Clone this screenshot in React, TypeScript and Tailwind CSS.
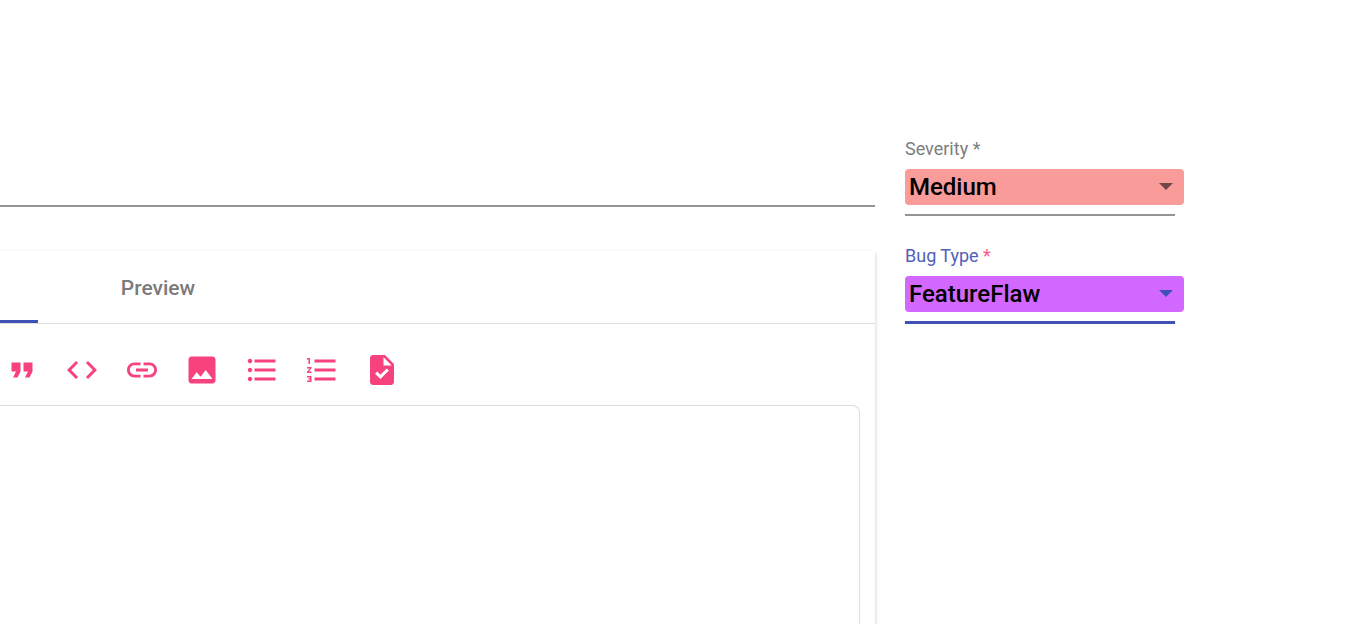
import { useState } from "react";

const TOOLS = [
  { label: "Quote", path: "M6 17h3l2-4V7H5v6h3zm8 0h3l2-4V7h-6v6h3z" },
  {
    label: "Code",
    path: "M9.4 16.6L4.8 12l4.6-4.6L8 6l-6 6 6 6 1.4-1.4zm5.2 0l4.6-4.6-4.6-4.6L16 6l6 6-6 6-1.4-1.4z",
  },
  {
    label: "Link",
    path: "M3.9 12c0-1.71 1.39-3.1 3.1-3.1h4V7H7c-2.76 0-5 2.24-5 5s2.24 5 5 5h4v-1.9H7c-1.71 0-3.1-1.39-3.1-3.1zM8 13h8v-2H8v2zm9-6h-4v1.9h4c1.71 0 3.1 1.39 3.1 3.1s-1.39 3.1-3.1 3.1h-4V17h4c2.76 0 5-2.24 5-5s-2.24-5-5-5z",
  },
  {
    label: "Image",
    path: "M21 19V5c0-1.1-.9-2-2-2H5c-1.1 0-2 .9-2 2v14c0 1.1.9 2 2 2h14c1.1 0 2-.9 2-2zM8.5 13.5l2.5 3.01L14.5 12l4.5 6H5l3.5-4.5z",
  },
  {
    label: "Bulleted list",
    path: "M4 10.5c-.83 0-1.5.67-1.5 1.5s.67 1.5 1.5 1.5 1.5-.67 1.5-1.5-.67-1.5-1.5-1.5zm0-6c-.83 0-1.5.67-1.5 1.5S3.17 7.5 4 7.5 5.5 6.83 5.5 6 4.83 4.5 4 4.5zm0 12c-.83 0-1.5.68-1.5 1.5s.68 1.5 1.5 1.5 1.5-.68 1.5-1.5-.67-1.5-1.5-1.5zM7 19h14v-2H7v2zm0-6h14v-2H7v2zm0-8v2h14V5H7z",
  },
  {
    label: "Numbered list",
    path: "M2 17h2v.5H3v1h1v.5H2v1h3v-4H2v1zm1-9h1V4H2v1h1v3zm-1 3h1.8L2 13.1v.9h3v-1H3.2L5 10.9V10H2v1zm5-6v2h14V5H7zm0 14h14v-2H7v2zm0-6h14v-2H7v2z",
  },
  {
    label: "Task",
    path: "M14 2H6c-1.1 0-1.99.9-1.99 2L4 20c0 1.1.89 2 1.99 2H18c1.1 0 2-.9 2-2V8l-6-6zm-3.06 16L7.4 14.46l1.41-1.41 2.12 2.12 4.24-4.24 1.41 1.41L10.94 18zM13 9V3.5L18.5 9H13z",
  },
];

type FieldProps = {
  id: string;
  label: string;
  options: string[];
  focused?: boolean;
  fill: string;
};

function SelectField({ id, label, options, focused, fill }: FieldProps) {
  const [value, setValue] = useState(options[0]);
  return (
    <div className="h-[107px]">
      <label
        htmlFor={id}
        className={`block text-lg leading-6 ${focused ? "text-[#5161ba]" : "text-[#7d7d7d]"}`}
      >
        {label} <span className={focused ? "text-[#f6588b]" : ""}>*</span>
      </label>
      <div
        className={`mt-2 w-[270px] pb-[9px] ${focused ? "border-b-3 border-[#3f51b5]" : "border-b-2 border-[#949494]"}`}
      >
        <div className="relative -mr-[9px]">
          <select
            id={id}
            required
            value={value}
            onChange={(e) => setValue(e.target.value)}
            className={`block h-9 w-full appearance-none rounded pr-10 pl-1 text-2xl font-medium text-black outline-none ${fill}`}
          >
            {options.map((option) => (
              <option key={option}>{option}</option>
            ))}
          </select>
          <svg
            viewBox="0 0 14 7"
            aria-hidden="true"
            className={`pointer-events-none absolute top-[14px] right-[11px] h-[7px] w-[14px] ${focused ? "fill-[#3f51b5]" : "fill-[#724747]"}`}
          >
            <path d="M0 0h14L7 7z" />
          </svg>
        </div>
      </div>
    </div>
  );
}

export default function App() {
  return (
    <main className="flex min-h-screen gap-[30px] bg-white font-[Roboto,sans-serif]">
      <section className="flex min-w-0 flex-1 flex-col pt-[157px]">
        <input
          aria-label="Title"
          className="h-[50px] w-full border-b-2 border-[#949494] text-2xl outline-none"
        />
        <div className="mt-11 flex flex-1 flex-col shadow-[0_2px_4px_rgba(0,0,0,0.22)]">
          <div role="tablist" className="flex h-[73px] border-b border-[#dedede]">
            <button
              role="tab"
              aria-selected="true"
              aria-label="Write"
              className="w-[38px] border-b-3 border-[#3f51b5]"
            />
            <button
              role="tab"
              aria-selected="false"
              className="w-60 pt-1 text-[21px] font-medium text-[#7b7b7b]"
            >
              Preview
            </button>
          </div>
          <div className="flex gap-6 pt-7 pb-[17px] pl-1">
            {TOOLS.map((tool) => (
              <button key={tool.label} aria-label={tool.label} className="size-9">
                <svg viewBox="0 0 24 24" className="size-9 fill-[#f6437d]">
                  <path d={tool.path} />
                </svg>
              </button>
            ))}
          </div>
          <textarea
            aria-label="Description"
            className="mr-[15px] flex-1 resize-none rounded-tr-lg border-t border-r border-[#dedede] p-4 text-2xl outline-none"
          />
        </div>
      </section>
      <aside className="w-[456px] shrink-0 pt-[137px]">
        <SelectField
          id="severity"
          label="Severity"
          options={["Medium", "Low", "High"]}
          fill="bg-[#f99b98]"
        />
        <SelectField
          id="bug-type"
          label="Bug Type"
          options={["FeatureFlaw", "Functional"]}
          fill="bg-[#d268ff]"
          focused
        />
      </aside>
    </main>
  );
}
